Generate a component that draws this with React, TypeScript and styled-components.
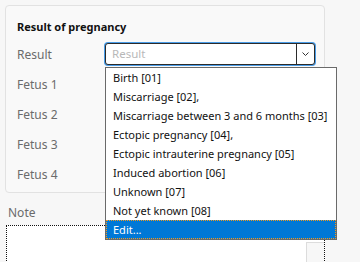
import * as React from 'react';
import styled, { createGlobalStyle } from 'styled-components';

const Global = createGlobalStyle`
    html, body {
        margin: 0;
        padding: 0;
        background: #f7f7f7;
        font-family: "Noto Sans", "Open Sans", sans-serif;
        font-size: 11px;
        color: #1a1a1a;
    }
`;

const Page = styled.div`
    width: 360px;
    height: 262px;
    overflow: hidden;
    padding: 5px 0 0 5px;
    box-sizing: border-box;
`;

const Panel = styled.div`
    width: 320px;
    height: 188px;
    box-sizing: border-box;
    border: 1px solid #e2e2e2;
    border-radius: 4px;
    background: #f9f9f9;
    padding: 13px 0 0 11px;
`;

const Title = styled.div`
    font-weight: bold;
    font-size: 11px;
    line-height: 16px;
    color: #111;
    margin-bottom: 8px;
`;

const Rows = styled.div`
    display: flex;
    flex-direction: column;
    gap: 8px;
`;

const Row = styled.div`
    display: flex;
    align-items: center;
    height: 22px;
`;

const Label = styled.span`
    width: 88px;
    color: #6b6b6b;
    font-size: 12px;
`;

const SelectWrap = styled.div`
    position: relative;
`;

const SelectBox = styled.div<{ $focused?: boolean }>`
    width: 210px;
    height: 22px;
    box-sizing: border-box;
    display: flex;
    border: 1px solid ${p => (p.$focused ? '#2b2b2b' : '#c8c8c8')};
    border-radius: 3px;
    background: #fff;
    box-shadow: ${p => (p.$focused ? '0 0 0 1px #4a9de8' : 'none')};
`;

const Placeholder = styled.span`
    flex: 1;
    padding-left: 6px;
    line-height: 20px;
    color: #b8b8b8;
    font-size: 11.5px;
`;

const Arrow = styled.span`
    width: 17px;
    border-left: 1px solid #2b2b2b;
    display: flex;
    align-items: center;
    justify-content: center;
`;

const List = styled.ul`
    position: absolute;
    top: 24px;
    left: 0;
    z-index: 10;
    width: 232px;
    margin: 0;
    padding: 0;
    list-style: none;
    box-sizing: border-box;
    border: 1px solid #6a6a6a;
    background: #fff;
`;

const Item = styled.li<{ $active?: boolean }>`
    height: 19px;
    line-height: 20px;
    padding-left: 7px;
    box-sizing: border-box;
    white-space: nowrap;
    color: ${p => (p.$active ? '#fff' : '#111')};
    background: ${p => (p.$active ? '#0078d7' : 'transparent')};
    outline: ${p => (p.$active ? '1px dotted #f39a1e' : 'none')};
    outline-offset: -1px;
`;

const NoteLabel = styled.div`
    color: #6b6b6b;
    font-size: 12px;
    padding: 12px 0 0 3px;
    line-height: 16px;
`;

const NoteBox = styled.div`
    margin: 4px 0 0 1px;
    width: 319px;
    height: 60px;
    box-sizing: border-box;
    border: 1px dotted #111;
    background: #fff;
    display: flex;
    justify-content: flex-end;
    padding-top: 16px;
`;

const ScrollTrack = styled.div`
    width: 17px;
    border-left: 1px solid #dcdcdc;
    border-top: 1px solid #dcdcdc;
    background: #f7f7f7;
`;

const options = [
    'Birth [01]',
    'Miscarriage [02],',
    'Miscarriage between 3 and 6 months [03]',
    'Ectopic pregnancy [04],',
    'Ectopic intrauterine pregnancy [05]',
    'Induced abortion [06]',
    'Unknown [07]',
    'Not yet known [08]',
    'Edit...',
];

const Chevron = () => (
    <svg width="7" height="4" viewBox="0 0 7 4">
        <path d="M0.5 0.5 L3.5 3.5 L6.5 0.5" fill="none" stroke="#333" strokeWidth="1" />
    </svg>
);

export default function App() {
    return <Page>
        <Global />
        <Panel>
            <Title>Result of pregnancy</Title>
            <Rows>
                <Row>
                    <Label>Result</Label>
                    <SelectWrap>
                        <SelectBox $focused>
                            <Placeholder>Result</Placeholder>
                            <Arrow><Chevron /></Arrow>
                        </SelectBox>
                        <List>
                            {options.map((o, i) => (
                                <Item key={o} $active={i === options.length - 1}>{o}</Item>
                            ))}
                        </List>
                    </SelectWrap>
                </Row>
                {[1, 2, 3, 4].map(n => (
                    <Row key={n}>
                        <Label>Fetus {n}</Label>
                    </Row>
                ))}
            </Rows>
        </Panel>
        <NoteLabel>Note</NoteLabel>
        <NoteBox>
            <ScrollTrack />
        </NoteBox>
    </Page>
}
